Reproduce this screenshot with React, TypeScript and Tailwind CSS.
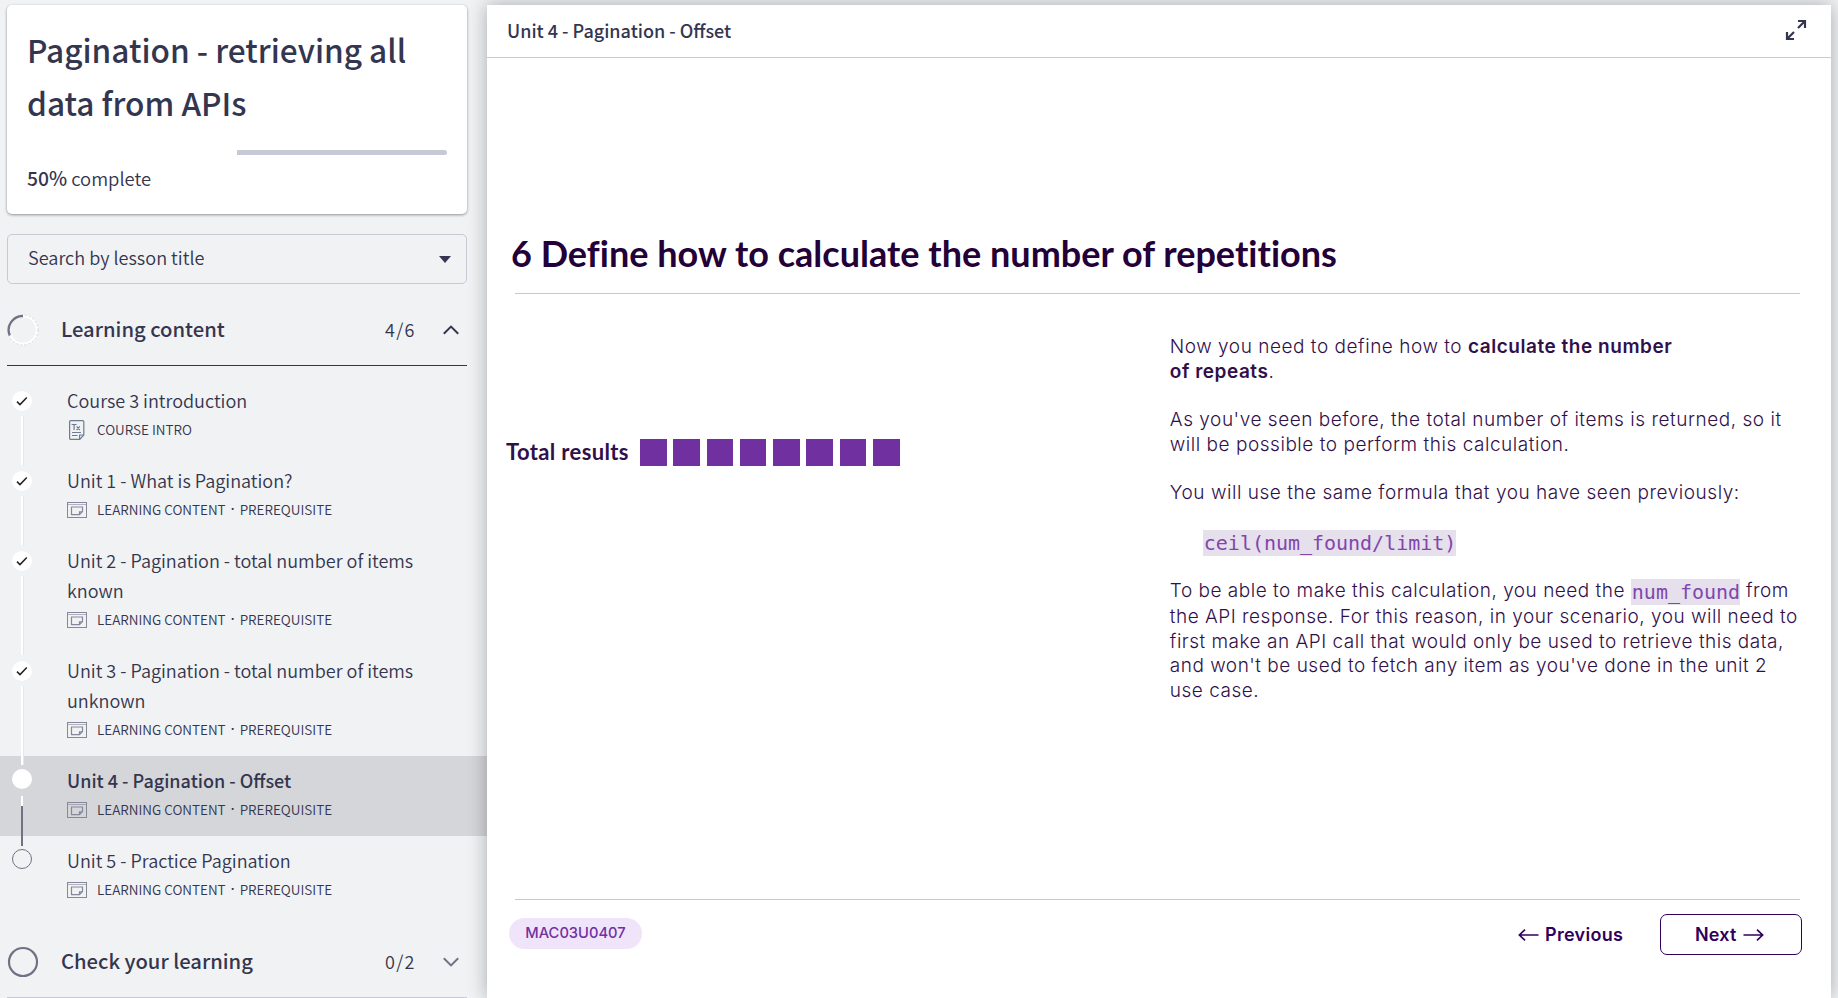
import React from "react";

type Lesson = {
  title: string;
  meta: string[];
  state: "done" | "current" | "todo";
  text?: boolean;
};

const PREREQ = ["LEARNING CONTENT", "PREREQUISITE"];

const lessons: Lesson[] = [
  { title: "Course 3 introduction", meta: ["COURSE INTRO"], state: "done", text: true },
  { title: "Unit 1 - What is Pagination?", meta: PREREQ, state: "done" },
  { title: "Unit 2 - Pagination - total number of items known", meta: PREREQ, state: "done" },
  { title: "Unit 3 - Pagination - total number of items unknown", meta: PREREQ, state: "done" },
  { title: "Unit 4 - Pagination - Offset", meta: PREREQ, state: "current" },
  { title: "Unit 5 - Practice Pagination", meta: PREREQ, state: "todo" },
];

function TextIcon() {
  return (
    <svg width="20" height="20" viewBox="0 0 20 20" fill="none" stroke="#6f7b92" strokeWidth="1.2">
      <path d="M3.8.6h11.8a1.2 1.2 0 0 1 1.2 1.2V15l-4 4.4h-9a1.2 1.2 0 0 1-1.2-1.2V1.8A1.2 1.2 0 0 1 3.8.6z" />
      <path d="M12.6 19v-4h4M5 12.5h9M5 15.5h5.5M4.6 4.5h5M7.1 4.5V10M9.6 6.3l3.2 3.7M12.8 6.3 9.6 10" />
    </svg>
  );
}

function ContentIcon() {
  return (
    <svg width="20" height="16" viewBox="0 0 20 16" fill="none" stroke="#85879a" strokeWidth="1">
      <rect x=".5" y=".5" width="19" height="15" />
      <path d="M.5 2.5h19" opacity=".6" />
      <path d="M4.5 5h11v4.6l-3 3.1h-8zM12.5 12.5V9.8h3" strokeWidth="1.2" />
    </svg>
  );
}

function Marker({ state }: { state: Lesson["state"] }) {
  if (state === "todo") {
    return <div className="h-5 w-5 rounded-full border border-[#6f7285]" />;
  }
  return (
    <div className="flex h-5 w-5 items-center justify-center rounded-full bg-white">
      {state === "done" && (
        <svg width="12" height="10" viewBox="0 0 12 10" fill="none" stroke="#222" strokeWidth="1.5">
          <path d="M1 5.6 4 8.6 10.8 1.4" />
        </svg>
      )}
    </div>
  );
}

function LessonRow({ lesson }: { lesson: Lesson }) {
  const current = lesson.state === "current";
  return (
    <li className={`relative flex pb-[11px] ${current ? "bg-[#d5d6da]" : ""}`}>
      <div className={`w-[67px] shrink-0 pl-3 ${lesson.state === "done" ? "pt-[15px]" : "pt-[13px]"}`}>
        <Marker state={lesson.state} />
      </div>
      {lesson.state === "done" && (
        <div className="absolute top-10 -bottom-[9px] left-[21px] z-10 w-[3px] border-r border-[#e6e7ea] bg-white" />
      )}
      {current && (
        <div className="absolute top-10 left-[21px] z-10 w-0.5">
          <div className="h-2.5 bg-white" />
          <div className="h-10 bg-[#6f7285]" />
        </div>
      )}
      <div className="w-[370px] pt-[9px]">
        <div
          className={`leading-[30px] text-[#34364f] ${current ? "text-[18px] font-medium" : "text-[18.05px] font-[350]"}`}
        >
          {lesson.title}
        </div>
        <div className="flex h-[30px] items-center">
          <span className="flex w-[30px] items-center">{lesson.text ? <TextIcon /> : <ContentIcon />}</span>
          <span className="flex pb-px text-[13.5px] leading-[29px] font-[350] whitespace-nowrap text-[#34364f]">
            {lesson.meta[0]}
            {lesson.meta[1] && (
              <>
                <span className="w-[14px] text-center font-['Open_Sans',sans-serif] font-semibold">·</span>
                {lesson.meta[1]}
              </>
            )}
          </span>
        </div>
      </div>
    </li>
  );
}

function Arrow({ left }: { left?: boolean }) {
  return (
    <svg
      width="21"
      height="12"
      viewBox="0 0 21 12"
      fill="none"
      stroke="#30005c"
      strokeWidth="1.7"
      className={left ? "rotate-180" : ""}
    >
      <path d="M.5 6h19M14 .7 19.6 6 14 11.3" />
    </svg>
  );
}

function Code({ children }: { children: React.ReactNode }) {
  return (
    <code className="inline-block h-[26px] bg-[#e6dfec] pl-px align-middle font-['DejaVu_Sans_Mono',monospace] text-[20px] leading-[26px] tracking-[-0.02px] font-normal text-[#8145ad]">
      {children}
    </code>
  );
}

function Sidebar() {
  return (
    <aside className="w-[487px] shrink-0 pt-[5px] font-['Noto_Sans_CJK_SC',sans-serif] text-[#34364f]">
      <section className="ml-[7px] h-[209px] w-[460px] rounded-[5px] bg-white pt-[18px] pl-5 shadow-[0_1px_3px_rgba(0,0,0,0.4)]">
        <h1 className="text-[31.6px] leading-[53px] font-medium">
          Pagination - retrieving all
          <br />
          data from APIs
        </h1>
        <div className="mt-[21px] flex h-[5px] w-[420px]">
          <div className="h-full w-1/2 bg-white" />
          <div className="h-full w-1/2 rounded-r-full bg-[#c7c9d6]" />
        </div>
        <p className="mt-[5px] text-[18.4px] leading-[36px] font-[350]">
          <span className="text-[19.3px] font-medium">50%</span> complete
        </p>
      </section>

      <div className="mt-5 ml-[7px] flex h-[50px] w-[460px] items-center justify-between rounded-[5px] border border-[#c7c9d6] pr-[15px] pl-5">
        <span className="pb-[3px] text-[18.1px] font-[350]">Search by lesson title</span>
        <svg width="12" height="7" viewBox="0 0 12 7">
          <path d="M0 0h12L6 7z" fill="#34364f" />
        </svg>
      </div>

      <div className="ml-[7px] flex h-[82px] w-[460px] items-center border-b border-[#34364f] pt-2.5">
        <svg width="32" height="32" viewBox="0 0 32 32" fill="none">
          <circle cx="16" cy="16" r="14" stroke="#fff" strokeWidth="2.5" />
          <circle cx="16" cy="16" r="15" stroke="#b9bbc8" strokeWidth=".6" strokeDasharray="2 2" />
          <path d="M16 2A14 14 0 0 0 2.8 21.5" stroke="#6f7285" strokeWidth="2.3" />
        </svg>
        <h2 className="ml-[22px] flex-1 text-[20.2px] font-medium">Learning content</h2>
        <span className="w-[58px] text-[18px] font-[350] tracking-[1.3px]">4/6</span>
        <svg width="16" height="10" viewBox="0 0 16 10" fill="none" stroke="#34364f" strokeWidth="2" className="mr-2">
          <path d="M.8 8.8 8 1.6l7.2 7.2" />
        </svg>
      </div>

      <ul className="pt-2.5">
        {lessons.map((l) => (
          <LessonRow key={l.title} lesson={l} />
        ))}
      </ul>

      <div className="ml-[7px] flex h-[82px] w-[460px] items-center border-b border-[#c7c9d6] pt-2.5">
        <svg width="32" height="32" viewBox="0 0 32 32" fill="none">
          <circle cx="16" cy="16" r="14" stroke="#6f7285" strokeWidth="2.2" />
        </svg>
        <h2 className="ml-[22px] flex-1 text-[20.2px] font-medium">Check your learning</h2>
        <span className="w-[58px] text-[18px] font-[350] tracking-[1.3px]">0/2</span>
        <svg width="16" height="10" viewBox="0 0 16 10" fill="none" stroke="#6f7285" strokeWidth="2" className="mr-2">
          <path d="M.8 1.2 8 8.4l7.2-7.2" />
        </svg>
      </div>
    </aside>
  );
}

function Slide() {
  return (
    <div className="px-7 font-['Inter',sans-serif]">
      <h2 className="mt-[166px] -ml-1 h-[69px] font-['Lato',sans-serif] text-[36px] leading-[58px] font-bold tracking-[0.02px] whitespace-nowrap text-[#240038] [font-variant-ligatures:none]">
        6 Define how to calculate the number of repetitions
      </h2>
      <div className="h-px w-[1285px] bg-[#cdc6cd]" />
      <div className="flex h-[605px]">
        <div className="-ml-[9px] flex w-[671px] items-center self-start pt-[142px]">
          <span className="w-[134px] pb-[2px] font-['Lato',sans-serif] text-[22px] leading-[31px] font-bold tracking-[0.36px] text-[#31104a]">
            Total results
          </span>
          <div className="flex gap-[6.8px]">
            {Array.from({ length: 8 }, (_, i) => (
              <div key={i} className="h-[26.5px] w-[26.5px] bg-[#7030a0]" />
            ))}
          </div>
        </div>
        <div className="flex w-[640px] flex-col gap-6 pt-[41px] text-[19px] leading-[24.6px] font-light tracking-[0.53px] whitespace-nowrap text-[#31104a]">
          <p>
            Now you need to define how to <b className="font-semibold">calculate the number</b>
            <br />
            <b className="font-semibold">of repeats</b>.
          </p>
          <p>
            As you've seen before, the total number of items is returned, so it
            <br />
            will be possible to perform this calculation.
          </p>
          <p>You will use the same formula that you have seen previously:</p>
          <p className="h-[25px] pl-[33px]">
            <Code>ceil(num_found/limit)</Code>
          </p>
          <p className="tracking-[0.5px]">
            To be able to make this calculation, you need the <Code>num_found</Code> from
            <br />
            the API response. For this reason, in your scenario, you will need to
            <br />
            first make an API call that would only be used to retrieve this data,
            <br />
            and won't be used to fetch any item as you've done in the unit 2
            <br />
            use case.
          </p>
        </div>
      </div>
      <div className="h-px w-[1285px] bg-[#cdc6cd]" />
      <div className="-ml-1.5 flex w-[1293px] items-start pt-[14px] text-[18px] font-semibold text-[#30005c]">
        <span className="mt-[4px] flex h-[31px] w-[133px] items-center justify-center rounded-full bg-[#f0e4fb] text-[14.7px] font-medium text-[#7030a0]">
          MAC03U0407
        </span>
        <div className="ml-auto flex h-[41px] items-center gap-[6px]">
          <Arrow left />
          <span className="w-[115px] tracking-[0.3px]">Previous</span>
        </div>
        <div className="flex h-[41px] w-[142px] items-center gap-[6px] rounded-[7px] border border-[#30005c] pl-[34px]">
          <span className="tracking-[0.2px]">Next</span>
          <Arrow />
        </div>
      </div>
    </div>
  );
}

export default function App() {
  return (
    <div className="flex h-[998px] w-[1838px] overflow-hidden bg-[#f1f2f4]">
      <Sidebar />
      <main className="relative z-20 mt-[5px] h-[993px] w-[1344px] shrink-0 bg-white shadow-[0_0_18px_rgba(0,0,0,0.3)]">
        <header className="flex h-[53px] items-center justify-between border-b border-[#c7c9d6] pr-6 pl-5">
          <span className="pb-[3px] font-['Noto_Sans_CJK_SC',sans-serif] text-[18px] leading-[48px] font-medium text-[#34364f]">
            Unit 4 - Pagination - Offset
          </span>
          <svg width="22" height="22" viewBox="0 0 22 22" fill="none" stroke="#34364f" strokeWidth="2.2" className="mb-0.5">
            <path d="M13 9 20 2M13 2h7v7M9 13l-7 7M2 13v7h7" />
          </svg>
        </header>
        <Slide />
      </main>
    </div>
  );
}
